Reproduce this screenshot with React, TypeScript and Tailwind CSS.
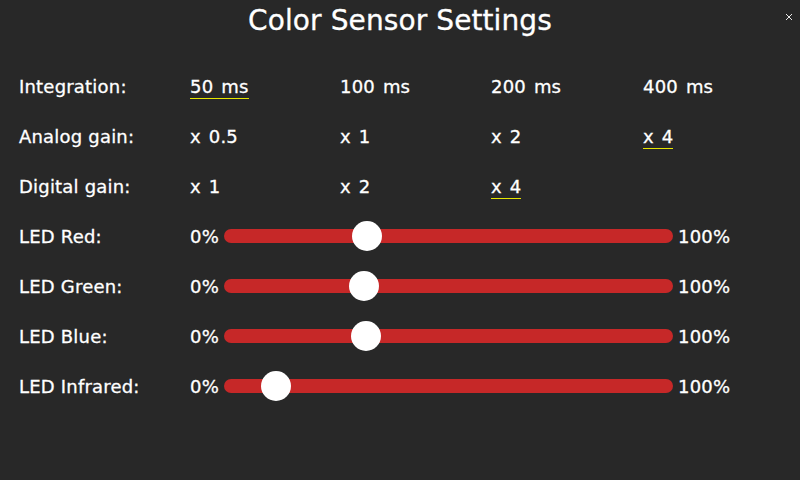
const options = [
  { label: "Integration:", values: ["50 ms", "100 ms", "200 ms", "400 ms"], selected: 0 },
  { label: "Analog gain:", values: ["x 0.5", "x 1", "x 2", "x 4"], selected: 3 },
  { label: "Digital gain:", values: ["x 1", "x 2", "x 4"], selected: 2 },
];

// knob centre offset from the track's left edge, in px
const leds = [
  { label: "LED Red:", knob: 143 },
  { label: "LED Green:", knob: 140 },
  { label: "LED Blue:", knob: 142 },
  { label: "LED Infrared:", knob: 52 },
];

const Option = ({ text, active }: { text: string; active: boolean }) => (
  <span className="relative [word-spacing:2px]">
    {text}
    {active && <span className="absolute left-0 right-0 top-[calc(100%+1px)] h-px bg-[#e6e600]" />}
  </span>
);

const Slider = ({ knob }: { knob: number }) => (
  <div className="relative h-[14px] w-[449px] rounded-full bg-[#c62828]">
    <div
      className="absolute top-1/2 h-[30px] w-[30px] -translate-y-1/2 rounded-full bg-white"
      style={{ left: knob - 15 }}
    />
  </div>
);

const App = () => {
  return (
    <div
      className="relative flex h-[480px] w-[800px] flex-col bg-[#282828] text-[18px] tracking-[0.2px] text-white [-webkit-text-stroke:0.3px_white]"
      style={{ fontFamily: '"DejaVu Sans", sans-serif' }}
    >
      <button className="absolute right-[7px] top-[13px] h-[8px] w-[8px]">
        <svg viewBox="0 0 8 8" className="h-[8px] w-[8px]" stroke="#e8e8e8" strokeWidth="1">
          <path d="M1 1L7 7M7 1L1 7" />
        </svg>
      </button>

      <div className="flex h-[40px] items-center justify-center pt-[1px] text-[28px] tracking-[0.1px]">
        Color Sensor Settings
      </div>

      <div className="mt-[21px] flex flex-col px-[19px]">
        {options.map((row) => (
          <div key={row.label} className="grid h-[50px] grid-cols-[171px_150px_151px_152px_1fr] items-center">
            <span>{row.label}</span>
            {row.values.map((v, i) => (
              <span key={v}>
                <Option text={v} active={i === row.selected} />
              </span>
            ))}
          </div>
        ))}

        {leds.map((led) => (
          <div key={led.label} className="flex h-[50px] items-center">
            <span className="w-[171px]">{led.label}</span>
            <span className="w-[34px]">0%</span>
            <Slider knob={led.knob} />
            <span className="ml-[5px]">100%</span>
          </div>
        ))}
      </div>
    </div>
  );
};

export default App;
